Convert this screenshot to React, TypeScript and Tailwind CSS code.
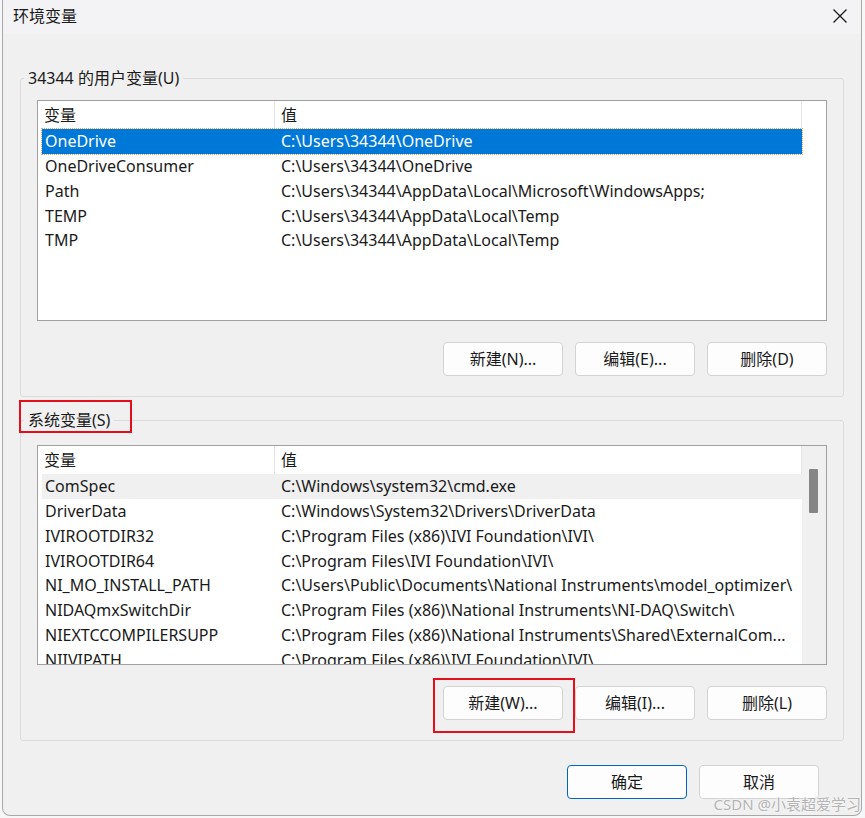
import React from 'react'

const USER_VARS = [
  { name: 'OneDrive', value: 'C:\\Users\\34344\\OneDrive' },
  { name: 'OneDriveConsumer', value: 'C:\\Users\\34344\\OneDrive' },
  { name: 'Path', value: 'C:\\Users\\34344\\AppData\\Local\\Microsoft\\WindowsApps;' },
  { name: 'TEMP', value: 'C:\\Users\\34344\\AppData\\Local\\Temp' },
  { name: 'TMP', value: 'C:\\Users\\34344\\AppData\\Local\\Temp' },
]

const SYSTEM_VARS = [
  { name: 'ComSpec', value: 'C:\\Windows\\system32\\cmd.exe' },
  { name: 'DriverData', value: 'C:\\Windows\\System32\\Drivers\\DriverData' },
  { name: 'IVIROOTDIR32', value: 'C:\\Program Files (x86)\\IVI Foundation\\IVI\\' },
  { name: 'IVIROOTDIR64', value: 'C:\\Program Files\\IVI Foundation\\IVI\\' },
  { name: 'NI_MO_INSTALL_PATH', value: 'C:\\Users\\Public\\Documents\\National Instruments\\model_optimizer\\' },
  { name: 'NIDAQmxSwitchDir', value: 'C:\\Program Files (x86)\\National Instruments\\NI-DAQ\\Switch\\' },
  { name: 'NIEXTCCOMPILERSUPP', value: 'C:\\Program Files (x86)\\National Instruments\\Shared\\ExternalCom...' },
  { name: 'NIIVIPATH', value: 'C:\\Program Files (x86)\\IVI Foundation\\IVI\\' },
]

type Var = { name: string; value: string }

function Header() {
  return (
    <div className="flex h-[28px] shrink-0 items-center bg-white">
      <div className="flex h-full w-[237px] items-center border-r border-[#e5e5e5] pl-[6px]">变量</div>
      <div className="flex h-full w-[527px] items-center border-r border-[#e5e5e5] pl-[6px]">值</div>
    </div>
  )
}

function Row({ v, state }: { v: Var; state?: 'selected' | 'hover' }) {
  const cls =
    state === 'selected'
      ? 'bg-[#0078d7] text-white outline outline-1 outline-dotted outline-[#d8a878]'
      : state === 'hover'
        ? 'bg-[#f0f0f0]'
        : ''
  return (
    <div className={`flex h-[24.75px] w-[760px] shrink-0 items-center whitespace-nowrap ${cls}`}>
      <span className="w-[233px] shrink-0 pl-[3px]">{v.name}</span>
      <span className="pl-[6px]">{v.value}</span>
    </div>
  )
}

function Btn({ label, primary }: { label: string; primary?: boolean }) {
  return (
    <div
      className={`flex h-[34px] w-[120px] items-center justify-center rounded-[4px] border bg-[#fdfdfd] ${
        primary ? 'border-[#0067c0]' : 'border-[#d3d3d3]'
      }`}
    >
      {label}
    </div>
  )
}

export default function App() {
  return (
    <div className="relative h-[818px] w-[865px] overflow-hidden bg-[#f7f7f7] font-['Noto_Sans','Noto_Sans_CJK_SC',sans-serif] text-[16px] leading-[22px] text-[#1a1a1a]">
      <div className="ml-[2px] h-[816px] w-[860px] overflow-hidden rounded-b-[8px] border border-t-0 border-[#a8a8a8] bg-[#f0f0f0]">
        {/* title bar */}
        <div className="flex h-[34px] items-center justify-between bg-[#f3f3f5] pb-[3px] pl-[10px] pr-[14px]">
          <span>环境变量</span>
          <svg width="14" height="14" viewBox="0 0 14 14" className="mt-[1px]">
            <path d="M0.5 0.5L13.5 13.5M13.5 0.5L0.5 13.5" stroke="#1a1a1a" strokeWidth="1.3" />
          </svg>
        </div>

        {/* user variables */}
        <fieldset className="mx-[17px] mt-[33px] w-[824px] rounded-[3px] border border-[#dcdcdc] px-[16px] pb-[20px]">
          <legend className="ml-[-13px] px-[4px]">34344 的用户变量(U)</legend>
          <div className="mt-[11px] flex h-[221px] flex-col overflow-hidden border border-[#a0a0a0] bg-white">
            <Header />
            <div className="pl-[4px]">
              {USER_VARS.map((v, i) => (
                <Row key={v.name} v={v} state={i === 0 ? 'selected' : undefined} />
              ))}
            </div>
          </div>
          <div className="mt-[21px] flex justify-end gap-[12px]">
            <Btn label="新建(N)..." />
            <Btn label="编辑(E)..." />
            <Btn label="删除(D)" />
          </div>
        </fieldset>

        {/* system variables */}
        <fieldset className="mx-[17px] mt-[12px] w-[824px] rounded-[3px] border border-[#dcdcdc] px-[16px] pb-[20px]">
          <legend className="relative ml-[-13px] px-[4px]">
            系统变量(S)
            <span className="pointer-events-none absolute left-[-5px] top-[-9px] h-[33px] w-[113px] border-2 border-[#e3101c]" />
          </legend>
          <div className="mt-[14px] flex h-[220px] overflow-hidden border border-[#a0a0a0] bg-white">
            <div className="flex w-[764px] flex-col overflow-hidden">
              <Header />
              <div className="pl-[4px]">
                {SYSTEM_VARS.map((v, i) => (
                  <Row key={v.name} v={v} state={i === 0 ? 'hover' : undefined} />
                ))}
              </div>
            </div>
            <div className="w-[24px] shrink-0 bg-[#f0f0f0] pl-[7px] pt-[23px]">
              <div className="h-[44px] w-[9px] rounded-[1px] bg-[#868686]" />
            </div>
          </div>
          <div className="mt-[21px] flex justify-end gap-[12px]">
            <div className="relative">
              <Btn label="新建(W)..." />
              <span className="pointer-events-none absolute left-[-10px] top-[-8px] h-[55px] w-[142px] border-2 border-[#e3101c]" />
            </div>
            <Btn label="编辑(I)..." />
            <Btn label="删除(L)" />
          </div>
        </fieldset>

        {/* dialog buttons */}
        <div className="mx-[17px] mt-[24px] flex w-[824px] justify-end gap-[12px] pr-[25px]">
          <Btn label="确定" primary />
          <Btn label="取消" />
        </div>
      </div>

      <span className="pointer-events-none absolute bottom-[3px] right-[4px] text-[15px] text-[#b4b4b4] [text-shadow:0_0_2px_#fff]">
        CSDN @小袁超爱学习
      </span>
    </div>
  )
}
